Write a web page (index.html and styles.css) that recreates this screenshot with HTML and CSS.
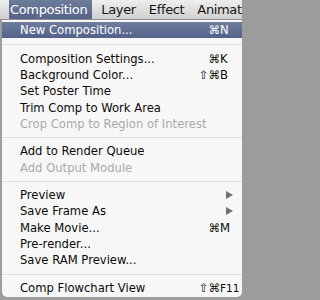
FILE: index.html
```html
<!DOCTYPE html>
<html>
<head>
<meta charset="utf-8">
<link rel="stylesheet" href="styles.css">
</head>
<body>
<div class="menubar">
  <span class="bar-item active">Composition</span>
  <span class="bar-item b-layer">Layer</span>
  <span class="bar-item b-effect">Effect</span>
  <span class="bar-item b-anim">Animation</span>
</div>
<div class="menu">
  <div class="row hl"><span class="label">New Composition...</span><span class="mods">⌘</span><span class="key">N</span></div>
  <div class="sep first"></div>
  <div class="row"><span class="label">Composition Settings...</span><span class="mods">⌘</span><span class="key">K</span></div>
  <div class="row"><span class="label">Background Color...</span><span class="mods">⇧⌘</span><span class="key">B</span></div>
  <div class="row"><span class="label">Set Poster Time</span></div>
  <div class="row"><span class="label">Trim Comp to Work Area</span></div>
  <div class="row dis"><span class="label">Crop Comp to Region of Interest</span></div>
  <div class="sep"></div>
  <div class="row"><span class="label">Add to Render Queue</span></div>
  <div class="row dis"><span class="label">Add Output Module</span></div>
  <div class="sep"></div>
  <div class="row"><span class="label">Preview</span><span class="arrow"></span></div>
  <div class="row"><span class="label">Save Frame As</span><span class="arrow"></span></div>
  <div class="row"><span class="label">Make Movie...</span><span class="mods">⌘</span><span class="key">M</span></div>
  <div class="row"><span class="label">Pre-render...</span></div>
  <div class="row"><span class="label">Save RAM Preview...</span></div>
  <div class="sep"></div>
  <div class="row"><span class="label">Comp Flowchart View</span><span class="mods">⇧⌘</span><span class="key small">F11</span></div>
</div>
</body>
</html>
```

FILE: styles.css
```css
html, body {
  margin: 0;
  padding: 0;
  background: #9c9c9c;
  width: 242px;
  height: 300px;
  overflow: hidden;
  font-family: "DejaVu Sans", sans-serif;
}
.menubar {
  height: 19px;
  display: flex;
  align-items: stretch;
  background: linear-gradient(#eeeeee, #d0d0d0);
  border-bottom: 1px solid #8e8e8e;
  white-space: nowrap;
  overflow: hidden;
  padding-left: 9px;
}
.bar-item {
  font-size: 13px;
  letter-spacing: -0.35px;
  line-height: 19px;
  color: #141414;
}
.bar-item.active {
  background: linear-gradient(#6d7c99, #56648a);
  color: #ffffff;
  padding: 0 5px 0 1px;
}
.b-layer { padding: 0 6px 0 9px; }
.b-effect { padding: 0 6px 0 7px; }
.b-anim { padding: 0 0 0 7px; }
.menu {
  margin-left: 2px;
  height: 277px;
  background: #f7f7f7;
  border-radius: 0 0 5px 5px;
  padding-top: 2px;
  box-sizing: border-box;
}
.row {
  height: 16.4px;
  display: flex;
  align-items: center;
  font-size: 11.6px;
  color: #0a0a0a;
  white-space: nowrap;
}
.row .label {
  padding-left: 18px;
  flex: 1;
}
.row.hl {
  background: linear-gradient(#6e7d9c, #53618a);
  color: #ffffff;
}
.row.dis { color: #a9a9a9; }
.mods {
  width: 40px;
  text-align: right;
}
.key {
  width: 22px;
  text-align: left;
}
.key.small { font-size: 10.5px; }
.arrow {
  width: 0;
  height: 0;
  border-left: 7px solid #707070;
  border-top: 4px solid transparent;
  border-bottom: 4px solid transparent;
  margin-right: 9px;
}
.sep {
  height: 10.8px;
  display: flex;
  align-items: center;
}
.sep.first { height: 12px; }
.sep::after {
  content: "";
  display: block;
  width: 100%;
  height: 1px;
  background: #e0e0e0;
}
```
